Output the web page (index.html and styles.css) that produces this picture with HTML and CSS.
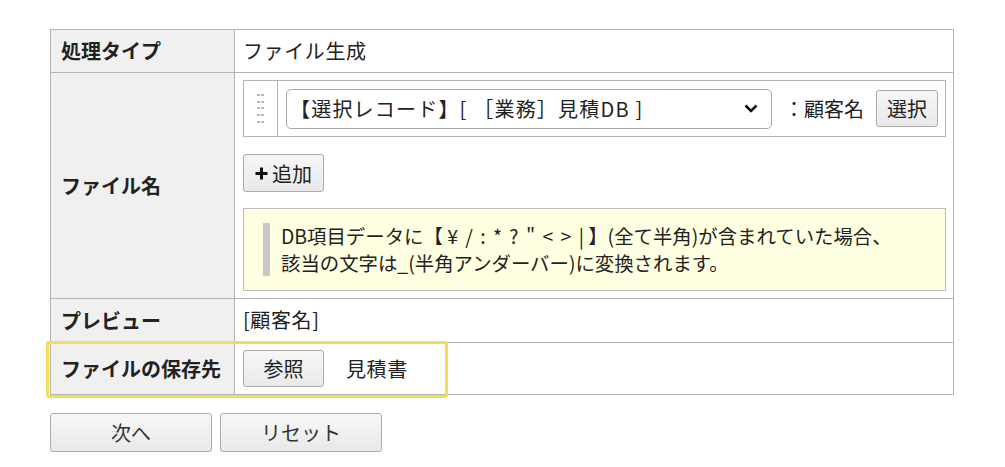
FILE: index.html
```html
<!DOCTYPE html>
<html lang="ja">
<head>
<meta charset="utf-8">
<title>ファイル生成設定</title>
<link rel="stylesheet" href="styles.css">
</head>
<body>
<div class="page">
  <div class="form-wrap">
    <table class="form-table">
      <tr class="row-type">
        <th>処理タイプ</th>
        <td>ファイル生成</td>
      </tr>
      <tr class="row-name">
        <th>ファイル名</th>
        <td>
          <div class="field-box">
            <div class="handle">
              <svg width="8" height="30" viewBox="0 0 8 30">
                <g fill="#b8b8b8">
                  <rect x="0" y="0" width="3" height="2"/><rect x="4" y="0" width="3" height="2"/>
                  <rect x="0" y="7" width="3" height="2"/><rect x="4" y="7" width="3" height="2"/>
                  <rect x="0" y="13" width="3" height="2"/><rect x="4" y="13" width="3" height="2"/>
                  <rect x="0" y="20" width="3" height="2"/><rect x="4" y="20" width="3" height="2"/>
                  <rect x="0" y="27" width="3" height="2"/><rect x="4" y="27" width="3" height="2"/>
                </g>
              </svg>
            </div>
            <div class="field-main">
              <div class="select">
                <span class="select-text">【選択レコード】[ ［業務］見積DB ]</span>
                <svg class="chevron" width="14" height="9" viewBox="0 0 14 9">
                  <path d="M1.5 1.5 L7 7 L12.5 1.5" fill="none" stroke="#111" stroke-width="2.6"/>
                </svg>
              </div>
              <span class="field-label">：顧客名</span>
              <button class="btn btn-select">選択</button>
            </div>
          </div>
          <button class="btn btn-add">
            <svg width="13" height="13" viewBox="0 0 13 13">
              <path d="M6.5 0.5 V12.5 M0.5 6.5 H12.5" stroke="#111" stroke-width="3"/>
            </svg>
            <span>追加</span>
          </button>
          <div class="note">
            <div class="note-inner">DB項目データに【 <span class="syms">¥ / : * ? " &lt; &gt; |</span> 】(全て半角)が含まれていた場合、<br>該当の文字は_(半角アンダーバー)に変換されます。</div>
          </div>
        </td>
      </tr>
      <tr class="row-preview">
        <th>プレビュー</th>
        <td>[顧客名]</td>
      </tr>
      <tr class="row-dest">
        <th>ファイルの保存先</th>
        <td>
          <div class="dest">
            <button class="btn btn-ref">参照</button>
            <span class="dest-name">見積書</span>
          </div>
        </td>
      </tr>
    </table>
    <div class="highlight"></div>
  </div>
  <div class="actions">
    <button class="btn btn-action">次へ</button>
    <button class="btn btn-action">リセット</button>
  </div>
</div>
</body>
</html>
```

FILE: styles.css
```css
* { box-sizing: border-box; }

html, body {
  margin: 0;
  padding: 0;
  background: #fff;
}

body {
  font-family: "Noto Sans CJK JP", "Noto Sans", sans-serif;
  font-size: 20px;
  color: #222;
}

.page {
  padding: 29px 0 0 50px;
}

.form-wrap {
  position: relative;
  width: 904px;
}

.form-table {
  width: 904px;
  border-collapse: collapse;
  table-layout: fixed;
}

.form-table th,
.form-table td {
  border: 1px solid #b4b4b4;
  vertical-align: middle;
  text-align: left;
  line-height: 30px;
}

.form-table th {
  width: 184px;
  background: #f0f0f0;
  font-weight: bold;
  padding: 6px 8px 6px 10px;
  white-space: nowrap;
}

.form-table td {
  padding: 6px 7px 6px 8px;
  letter-spacing: 0.6px;
}

.row-name td {
  padding: 7px 7px 7px 8px;
  letter-spacing: 0;
}

.row-preview td {
  padding: 6px 7px 7px 8px;
}

.row-dest th,
.row-dest td {
  padding-top: 7px;
  padding-bottom: 7px;
}

.field-box {
  display: flex;
  border: 1px solid #b4b4b4;
  height: 57px;
}

.handle {
  width: 34px;
  border-right: 1px solid #b4b4b4;
  display: flex;
  align-items: center;
  justify-content: center;
  padding-left: 1px;
}

.handle svg { display: block; }

.field-main {
  flex: 1;
  display: flex;
  align-items: center;
  padding: 0 7px 0 8px;
}

.select {
  width: 486px;
  height: 40px;
  border: 1px solid #a8a8a8;
  border-radius: 5px;
  background: #fff;
  display: flex;
  align-items: center;
  justify-content: space-between;
  padding: 0 13px 0 3px;
  font-size: 20px;
}

.select-text {
  white-space: nowrap;
  letter-spacing: 1.2px;
}

.chevron { display: block; }

.field-label {
  margin-left: 12px;
  font-size: 20px;
  white-space: nowrap;
}

.btn {
  font-family: inherit;
  color: #222;
  background: linear-gradient(#f7f7f7, #e9e9e9);
  border: 1px solid #ababab;
  border-radius: 3px;
  padding: 0;
  margin: 0;
  cursor: pointer;
  display: inline-flex;
  align-items: center;
  justify-content: center;
}

.btn-select {
  margin-left: auto;
  width: 62px;
  height: 37px;
  font-size: 20px;
}

.btn-add {
  margin-top: 17px;
  width: 81px;
  height: 38px;
  font-size: 20px;
  gap: 4px;
}

.btn-add svg { display: block; }

.note {
  margin-top: 16px;
  background: #ffffe1;
  border: 1px solid #bdbdbd;
  padding: 14px 18px 14px 19px;
}

.note-inner {
  border-left: 7px solid #c8c8c8;
  padding-left: 11px;
  font-size: 19.4px;
  line-height: 26.5px;
  white-space: nowrap;
}

.syms {
  word-spacing: 3px;
}

.dest {
  display: flex;
  align-items: center;
  height: 37px;
}

.btn-ref {
  width: 81px;
  height: 37px;
  font-size: 20px;
}

.dest-name {
  margin-left: 22px;
}

.highlight {
  position: absolute;
  left: -4px;
  top: 312px;
  width: 402px;
  height: 57px;
  border: 3px solid #f2dc5a;
  border-radius: 3px;
  pointer-events: none;
}

.actions {
  display: flex;
  gap: 8px;
  margin-top: 18px;
}

.btn-action {
  width: 162px;
  height: 39px;
  font-size: 20px;
  color: #333;
}
```
